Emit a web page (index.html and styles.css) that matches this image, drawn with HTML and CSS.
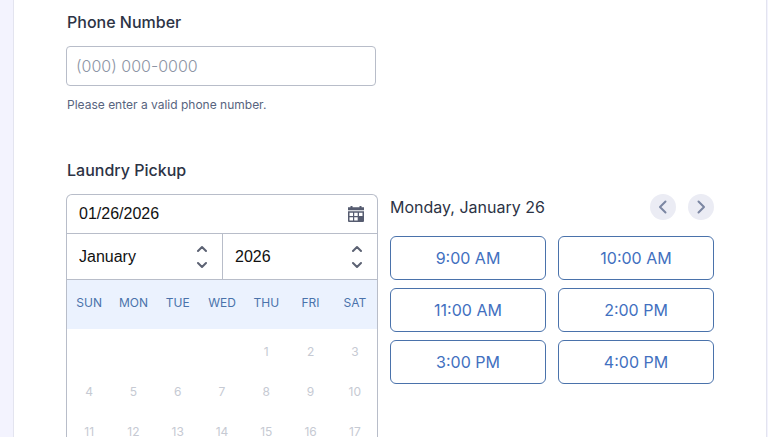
FILE: index.html
```html
<!DOCTYPE html>
<html lang="en">
<head>
<meta charset="utf-8">
<meta name="viewport" content="width=device-width, initial-scale=1">
<title>Laundry Pickup</title>
<link rel="stylesheet" href="styles.css">
</head>
<body>
<form class="form">
  <section class="field">
    <label class="label" for="phone">Phone Number</label>
    <input class="phone" id="phone" type="tel" placeholder="(000) 000-0000" aria-describedby="phone-hint">
    <p class="hint" id="phone-hint">Please enter a valid phone number.</p>
  </section>

  <section class="field">
    <label class="label" for="date">Laundry Pickup</label>
    <div class="appointment">
      <div class="calendar">
        <div class="date-row">
          <input class="date" id="date" type="text" value="01/26/2026">
          <button class="icon-button" type="button" aria-label="Choose date">
            <svg width="16" height="16" viewBox="0 0 16 16">
              <path fill="#565c70" fill-rule="evenodd" d="M0 1.200h2.500V0h2v1.200h7V0h2v1.200H16V4.300H0zM0 5.300h16V15a1 1 0 0 1-1 1H1a1 1 0 0 1-1-1zM1.500 6.800v3.200H5V6.800zM6.200 6.800v3.200h3.500V6.800zM11 6.800v3.200h3.500V6.800zM1.500 11.200v3.200H5v-3.200zM6.200 11.200v3.200h3.500v-3.200z"/>
            </svg>
          </button>
        </div>
        <div class="period-row">
          <div class="picker">
            <select aria-label="Month"><option>January</option></select>
            <svg class="updown" width="12" height="26" viewBox="0 0 12 26"><path d="M2 7l4-4 4 4M2 19l4 4 4-4"/></svg>
          </div>
          <div class="picker">
            <select aria-label="Year"><option>2026</option></select>
            <svg class="updown" width="12" height="26" viewBox="0 0 12 26"><path d="M2 7l4-4 4 4M2 19l4 4 4-4"/></svg>
          </div>
        </div>
        <table class="days">
          <thead>
            <tr><th>SUN</th><th>MON</th><th>TUE</th><th>WED</th><th>THU</th><th>FRI</th><th>SAT</th></tr>
          </thead>
          <tbody>
            <tr><td></td><td></td><td></td><td></td><td>1</td><td>2</td><td>3</td></tr>
            <tr><td>4</td><td>5</td><td>6</td><td>7</td><td>8</td><td>9</td><td>10</td></tr>
            <tr><td>11</td><td>12</td><td>13</td><td>14</td><td>15</td><td>16</td><td>17</td></tr>
          </tbody>
        </table>
      </div>

      <div class="times">
        <div class="times-head">
          <span class="day-name">Monday, January 26</span>
          <button class="round" type="button" aria-label="Previous day">
            <svg width="16" height="16" viewBox="0 0 16 16"><path d="M10.500 2.500L5 8l5.500 5.500"/></svg>
          </button>
          <button class="round" type="button" aria-label="Next day">
            <svg width="16" height="16" viewBox="0 0 16 16"><path d="M5.500 2.500L11 8l-5.500 5.500"/></svg>
          </button>
        </div>
        <div class="slots">
          <button class="slot" type="button">9:00 AM</button>
          <button class="slot" type="button">10:00 AM</button>
          <button class="slot" type="button">11:00 AM</button>
          <button class="slot" type="button">2:00 PM</button>
          <button class="slot" type="button">3:00 PM</button>
          <button class="slot" type="button">4:00 PM</button>
        </div>
      </div>
    </div>
  </section>
</form>
</body>
</html>
```
FILE: styles.css
```css
* {
  box-sizing: border-box;
}

html {
  overflow: hidden;
}

body {
  margin: 0;
  background: #f3f3fe;
  color: #2c3345;
  font-family: Inter, "Liberation Sans", sans-serif;
  font-size: 16px;
  line-height: 20px;
}

button,
input,
select {
  margin: 0;
  padding: 0;
  border: 0;
  background: none;
  font: inherit;
  color: inherit;
}

.form {
  display: flex;
  flex-direction: column;
  gap: 47px;
  min-height: 100vh;
  margin: 0 1px 0 13px;
  padding: 12px 52px 0;
  border: solid #e3e4ef;
  border-width: 0 1px;
  background: #fff;
}

.label {
  display: block;
  margin-bottom: 14px;
  padding-left: 1px;
  font-weight: 500;
}

.phone {
  display: block;
  width: 310px;
  max-width: 100%;
  height: 40px;
  padding: 0 9px;
  border: 1px solid #b8bdc9;
  border-radius: 4px;
}

.phone::placeholder {
  color: #8d95a5;
  font-weight: 300;
  opacity: 1;
}

.hint {
  margin: 11px 0 0;
  padding-left: 1px;
  color: #57647e;
  font-size: 12px;
  line-height: 16px;
}

.appointment {
  display: grid;
  grid-template-columns: 312px 1fr;
  gap: 12px;
}

.calendar {
  border: 1px solid #b8bdc9;
  border-bottom: 0;
  border-radius: 6px 6px 0 0;
  color: #111;
}

.date-row {
  display: flex;
  align-items: center;
  height: 39px;
  padding: 0 13px 0 12px;
  border-bottom: 1px solid #b8bdc9;
}

.date,
.picker select {
  font-family: "Liberation Sans", sans-serif;
}

.date {
  flex: 1;
  min-width: 0;
}

.icon-button,
.round {
  display: flex;
  align-items: center;
  justify-content: center;
}

.period-row {
  display: grid;
  grid-template-columns: 1fr 1fr;
  height: 46px;
  border-bottom: 1px solid #b8bdc9;
}

.picker {
  display: grid;
  align-items: center;
}

.picker + .picker {
  border-left: 1px solid #b8bdc9;
}

.picker select,
.updown {
  grid-area: 1 / 1;
}

.picker select {
  height: 100%;
  padding: 0 12px;
  appearance: none;
}

.updown {
  justify-self: end;
  margin-right: 14px;
  pointer-events: none;
}

.updown path {
  fill: none;
  stroke: #5c6273;
  stroke-width: 2;
  stroke-linecap: round;
  stroke-linejoin: round;
}

.days {
  width: 100%;
  table-layout: fixed;
  border-collapse: collapse;
  font-size: 12px;
  text-align: center;
}

.days th {
  height: 49px;
  padding: 0 0 3px;
  background: #ebf2fe;
  color: #4a72ab;
  font-weight: 400;
}

.days td {
  height: 40px;
  padding: 6px 0 0;
  color: #c6cad3;
}

.times-head {
  display: flex;
  align-items: center;
  gap: 12px;
  margin-bottom: 16px;
}

.day-name {
  flex: 1;
}

.round {
  width: 26px;
  height: 26px;
  border-radius: 50%;
  background: #ebecf4;
}

.round path {
  fill: none;
  stroke: #7b86a2;
  stroke-width: 2;
  stroke-linecap: round;
  stroke-linejoin: round;
}

.slots {
  display: grid;
  grid-template-columns: 1fr 1fr;
  gap: 8px 12px;
}

.slot {
  height: 44px;
  border: 1px solid #4a72ab;
  border-radius: 6px;
  color: #4270c0;
}
```
